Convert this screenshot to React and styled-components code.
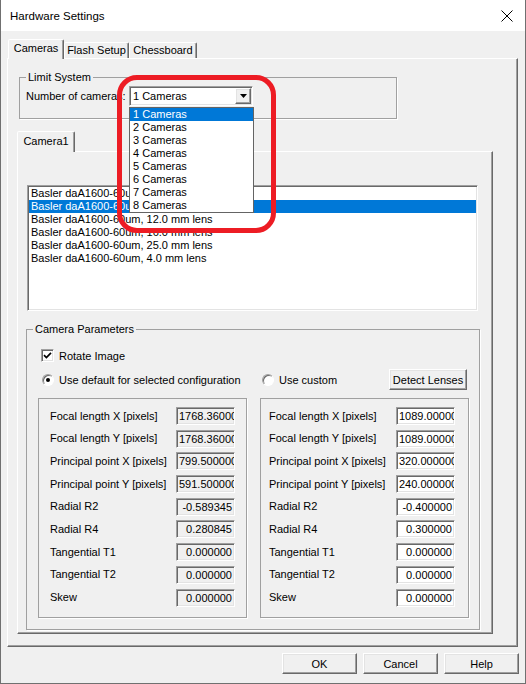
import React from "react";
import styled, { createGlobalStyle } from "styled-components";

const cameraCounts = [1, 2, 3, 4, 5, 6, 7, 8];

const lenses = [
  "Basler daA1600-60um, 6.0 mm lens",
  "Basler daA1600-60um, 8.0 mm lens",
  "Basler daA1600-60um, 12.0 mm lens",
  "Basler daA1600-60um, 16.0 mm lens",
  "Basler daA1600-60um, 25.0 mm lens",
  "Basler daA1600-60um, 4.0 mm lens",
];

const labels = [
  "Focal length X [pixels]",
  "Focal length Y [pixels]",
  "Principal point X [pixels]",
  "Principal point Y [pixels]",
  "Radial R2",
  "Radial R4",
  "Tangential T1",
  "Tangential T2",
  "Skew",
];

const defaultValues = [
  "1768.360000",
  "1768.360000",
  "799.500000",
  "591.500000",
  "-0.589345",
  "0.280845",
  "0.000000",
  "0.000000",
  "0.000000",
];

const customValues = [
  "1089.000000",
  "1089.000000",
  "320.000000",
  "240.000000",
  "-0.400000",
  "0.300000",
  "0.000000",
  "0.000000",
  "0.000000",
];

const App = () => {
  return (
    <>
      <GlobalStyle />
      <Window>
        <TitleBar>
          <Title>Hardware Settings</Title>
          <svg width="12" height="12" viewBox="0 0 12 12">
            <path d="M0.5 0.5 L11.5 11.5 M11.5 0.5 L0.5 11.5" stroke="#000" strokeWidth="1" />
          </svg>
        </TitleBar>

        <Body>
          <TabStrip $inset={1}>
            <Tab $active $w={56}>Cameras</Tab>
            <Tab $w={65}>Flash Setup</Tab>
            <Tab $w={68}>Chessboard</Tab>
          </TabStrip>

          <TabPanel $w={511} $h={589}>
            <LimitGroup>
              <Legend>Limit System</Legend>
              <ComboRow>
                <ComboLabel>Number of cameras:</ComboLabel>
                <Combo>
                  <ComboText>1 Cameras</ComboText>
                  <ComboButton>
                    <svg width="7" height="4" viewBox="0 0 7 4">
                      <path d="M0 0 H7 L3.5 4 Z" fill="#000" />
                    </svg>
                  </ComboButton>
                  <DropList>
                    {cameraCounts.map((n) => (
                      <DropItem key={n} $active={n === 1}>
                        {n} Cameras
                      </DropItem>
                    ))}
                  </DropList>
                </Combo>
              </ComboRow>
            </LimitGroup>

            <CameraTabs>
              <TabStrip>
                <Tab $active $w={58} $h={21} $pt={3}>
                  Camera1
                </Tab>
              </TabStrip>
              <TabPanel $w={476} $h={483}>
                <LensList>
                  {lenses.map((l, i) => (
                    <LensItem key={l} $active={i === 1}>
                      {l}
                    </LensItem>
                  ))}
                </LensList>

                <ParamsGroup>
                  <Legend $offset={-5}>Camera Parameters</Legend>
                  <CheckRow>
                    <CheckBox>
                      <svg width="9" height="9" viewBox="0 0 9 9">
                        <path d="M1 4.2 L3.4 6.6 L8 1.8" stroke="#000" strokeWidth="1.7" fill="none" />
                      </svg>
                    </CheckBox>
                    <span>Rotate Image</span>
                  </CheckRow>

                  <RadioRow>
                    <RadioCell $pl={4}>
                      <Radio $checked />
                      <span>Use default for selected configuration</span>
                    </RadioCell>
                    <RadioCell $pl={2}>
                      <Radio />
                      <span>Use custom</span>
                      <DetectButton>Detect Lenses</DetectButton>
                    </RadioCell>
                  </RadioRow>

                  <FieldBoxes>
                    <FieldBox $pl={11} $labelW={126}>
                      {labels.map((l, i) => (
                        <React.Fragment key={l}>
                          <FieldLabel>{l}</FieldLabel>
                          <FieldValue $disabled>{defaultValues[i]}</FieldValue>
                        </React.Fragment>
                      ))}
                    </FieldBox>
                    <FieldBox $pl={8} $labelW={127}>
                      {labels.map((l, i) => (
                        <React.Fragment key={l}>
                          <FieldLabel>{l}</FieldLabel>
                          <FieldValue>{customValues[i]}</FieldValue>
                        </React.Fragment>
                      ))}
                    </FieldBox>
                  </FieldBoxes>
                </ParamsGroup>
              </TabPanel>
            </CameraTabs>
          </TabPanel>

          <Footer>
            <DialogButton>OK</DialogButton>
            <DialogButton>Cancel</DialogButton>
            <DialogButton>Help</DialogButton>
          </Footer>
        </Body>

        <Annotation />
      </Window>
    </>
  );
};

export default App;

const GlobalStyle = createGlobalStyle`
  html, body {
    margin: 0;
    padding: 0;
    background: #f0f0f0;
  }
  body {
    font-family: "Liberation Sans", Arial, sans-serif;
    font-size: 11px;
    color: #000;
  }
  * {
    box-sizing: border-box;
  }
`;

const sunken = `
  border-style: solid;
  border-width: 1px;
  border-color: #a0a0a0 #ffffff #ffffff #a0a0a0;
  box-shadow: inset 1px 1px 0 #696969, inset -1px -1px 0 #e3e3e3;
`;

const raised = `
  border-style: solid;
  border-width: 1px;
  border-color: #ffffff #696969 #696969 #ffffff;
  box-shadow: inset -1px -1px 0 #a0a0a0, inset 1px 1px 0 #e3e3e3;
  background: #f0f0f0;
`;

const Window = styled.div`
  position: relative;
  width: 526px;
  height: 684px;
  background: #f0f0f0;
  border: 1px solid #707070;
  border-top: none;
  display: flex;
  flex-direction: column;
  overflow: hidden;
`;

const TitleBar = styled.div`
  height: 31px;
  flex: none;
  background: #fff;
  display: flex;
  align-items: center;
  justify-content: space-between;
  padding: 0 12px 0 9px;
`;

const Title = styled.div`
  font-size: 11.5px;
`;

const Body = styled.div`
  padding: 8px 0 0 6px;
  display: flex;
  flex-direction: column;
`;

const TabStrip = styled.div`
  display: flex;
  align-items: flex-end;
  padding-left: ${(p) => p.$inset || 0}px;
`;

const Tab = styled.div`
  position: relative;
  z-index: ${(p) => (p.$active ? 2 : 1)};
  width: ${(p) => p.$w}px;
  height: ${(p) => (p.$active ? p.$h || 20 : 16)}px;
  margin-bottom: ${(p) => (p.$active ? -1 : 0)}px;
  padding-top: ${(p) => (p.$active ? (p.$pt ?? 2) : 1)}px;
  line-height: 13px;
  text-align: center;
  white-space: nowrap;
  background: #f0f0f0;
  border: 1px solid;
  border-bottom: none;
  border-color: #fff #696969 transparent #fff;
  box-shadow: inset -1px 0 0 #a0a0a0;
  border-radius: 2px 2px 0 0;
`;

const TabPanel = styled.div`
  width: ${(p) => p.$w}px;
  height: ${(p) => p.$h}px;
  flex: none;
  display: flex;
  flex-direction: column;
  align-items: flex-start;
  border: 1px solid;
  border-color: #fff #696969 #696969 #fff;
  box-shadow: inset -1px -1px 0 #a0a0a0;
`;

const GroupBox = styled.fieldset`
  margin: 0;
  min-width: 0;
  flex: none;
  border: 1px solid #a0a0a0;
  box-shadow: 1px 1px 0 #fff;
`;

const Legend = styled.legend`
  padding: 0 2px;
  line-height: 13px;
  margin-left: ${(p) => p.$offset || 0}px;
`;

const LimitGroup = styled(GroupBox)`
  width: 378px;
  height: 48px;
  margin: 12px 0 0 11px;
  padding: 2px 0 0 6px;
`;

const ComboRow = styled.div`
  display: flex;
  align-items: center;
`;

const ComboLabel = styled.div`
  width: 103px;
  white-space: nowrap;
  overflow: hidden;
`;

const Combo = styled.div`
  position: relative;
  width: 124px;
  height: 20px;
  padding: 1px;
  ${sunken}
  background: #fff;
  display: flex;
  align-items: center;
`;

const ComboText = styled.div`
  flex: 1;
  padding-left: 2px;
  line-height: 13px;
`;

const ComboButton = styled.div`
  width: 16px;
  height: 16px;
  ${raised}
  display: flex;
  align-items: center;
  justify-content: center;
`;

const DropList = styled.div`
  position: absolute;
  top: 100%;
  left: -1px;
  width: 125px;
  margin-top: 2px;
  background: #fff;
  border: 1px solid #646464;
  z-index: 5;
`;

const DropItem = styled.div`
  height: 13px;
  line-height: 13px;
  padding-left: 3px;
  background: ${(p) => (p.$active ? "#0078d7" : "transparent")};
  color: ${(p) => (p.$active ? "#fff" : "#000")};
`;

const CameraTabs = styled.div`
  margin: 12px 0 0 9px;
  display: flex;
  flex-direction: column;
`;

const LensList = styled.div`
  width: 451px;
  height: 126px;
  flex: none;
  margin: 33px 0 0 9px;
  padding: 1px;
  ${sunken}
  background: #fff;
`;

const LensItem = styled.div`
  height: 13px;
  line-height: 13px;
  padding-left: 2px;
  white-space: nowrap;
  background: ${(p) => (p.$active ? "#0078d7" : "transparent")};
  color: ${(p) => (p.$active ? "#fff" : "#000")};
`;

const ParamsGroup = styled(GroupBox)`
  width: 454px;
  height: 307px;
  margin: 12px 0 0 8px;
  padding: 0 0 0 11px;
`;

const CheckRow = styled.div`
  margin-top: 13px;
  padding-left: 3px;
  height: 13px;
  display: flex;
  align-items: center;
  gap: 5px;
`;

const CheckBox = styled.div`
  width: 13px;
  height: 13px;
  ${sunken}
  background: #fff;
  display: flex;
  align-items: center;
  justify-content: center;
`;

const RadioRow = styled.div`
  margin-top: 7px;
  height: 21px;
  display: grid;
  grid-template-columns: 222px 209px;
`;

const RadioCell = styled.div`
  display: flex;
  align-items: center;
  gap: 5px;
  padding-left: ${(p) => p.$pl}px;
  padding-right: 2px;
`;

const Radio = styled.div`
  position: relative;
  width: 12px;
  height: 12px;
  flex: none;
  border-radius: 50%;
  border: 1px solid;
  border-color: #a0a0a0 #fff #fff #a0a0a0;
  box-shadow: inset 1px 1px 0 #696969;
  background: #fff;

  &::after {
    content: "";
    display: ${(p) => (p.$checked ? "block" : "none")};
    position: absolute;
    left: 3px;
    top: 3px;
    width: 4px;
    height: 4px;
    border-radius: 50%;
    background: #000;
  }
`;

const DetectButton = styled.div`
  margin-left: auto;
  width: 78px;
  height: 21px;
  ${raised}
  display: flex;
  align-items: center;
  justify-content: center;
`;

const FieldBoxes = styled.div`
  margin-top: 8px;
  display: flex;
  gap: 13px;
`;

const FieldBox = styled.div`
  width: 209px;
  height: 220px;
  border: 1px solid #a0a0a0;
  box-shadow: 1px 1px 0 #fff;
  padding: 8px 0 0 ${(p) => p.$pl}px;
  display: grid;
  grid-template-columns: ${(p) => p.$labelW}px 59px;
  grid-auto-rows: 18px;
  row-gap: 4.7px;
  align-items: center;
  align-content: start;
`;

const FieldLabel = styled.div`
  white-space: nowrap;
  line-height: 13px;
`;

const FieldValue = styled.div`
  height: 18px;
  ${sunken}
  background: ${(p) => (p.$disabled ? "#f0f0f0" : "#fff")};
  padding: 0 2px;
  line-height: 16px;
  text-align: right;
  white-space: nowrap;
  overflow: hidden;
`;

const Footer = styled.div`
  margin-top: 6px;
  padding-right: 6px;
  display: flex;
  justify-content: flex-end;
  gap: 6px;
`;

const DialogButton = styled.div`
  width: 75px;
  height: 21px;
  ${raised}
  display: flex;
  align-items: center;
  justify-content: center;
`;

const Annotation = styled.div`
  position: absolute;
  left: 116px;
  top: 75px;
  width: 159px;
  height: 158px;
  border: 5px solid #ed1c24;
  border-radius: 20px;
  z-index: 10;
  pointer-events: none;
`;
